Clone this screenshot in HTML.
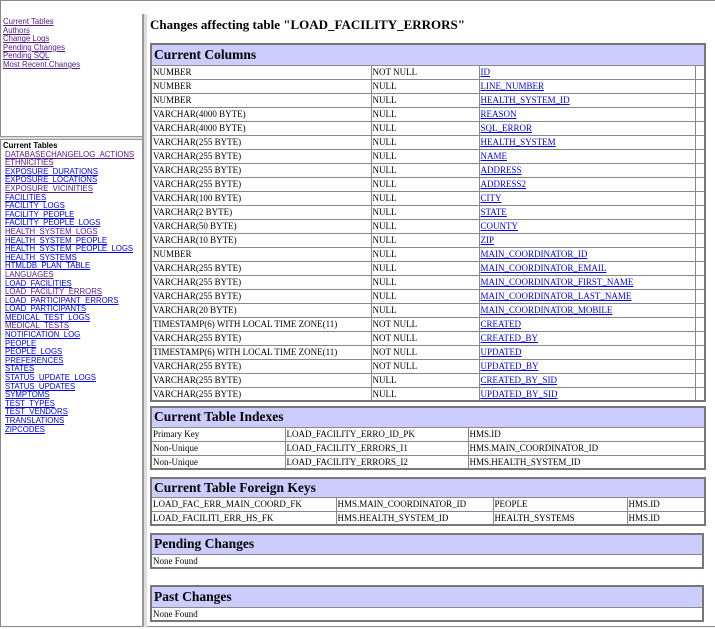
<!DOCTYPE html>
<html><head><meta charset="utf-8"><style>
*{margin:0;padding:0;box-sizing:border-box}
body{width:715px;height:629px;overflow:hidden;background:#fff;position:relative;font-family:"Liberation Serif",serif}
a{color:#0000EE}
a.v{color:#551A8B}
#frame{position:absolute;left:0;top:0;width:715px;height:627px;border-top:1px solid #888;border-left:1px solid #888;border-bottom:1px solid #888}
#vdiv{position:absolute;left:142px;top:14px;width:5px;height:613px;background:#ddd;border-left:2px solid #999}
#hdiv{position:absolute;left:0;top:136px;width:142px;height:4px;background:#ddd;border-top:1px solid #999;border-bottom:1px solid #999}
.nav{position:absolute;left:3px;font-family:"Liberation Sans",sans-serif;font-size:7.8px;line-height:8.6px}
.nav a{display:block}
.list a{padding-left:2px}
h1{position:absolute;left:150px;top:17px;font-size:13px;font-weight:bold}
table{position:absolute;left:150px;width:554px;border-collapse:collapse;table-layout:fixed;border:2px solid #777;font-size:9px}
td{border:1px solid #888;padding:0 1px;height:14px;white-space:nowrap;overflow:hidden;line-height:12px}
th{background:#ccf;text-align:left;font-size:13.5px;font-weight:bold;padding:0 2px;border:1px solid #888}
</style></head><body>
<div id="frame"></div>
<div class="nav" style="top:18px">
<a class="v" href="#">Current Tables</a><a class="v" href="#">Authors</a><a class="v" href="#">Change Logs</a><a class="v" href="#">Pending Changes</a><a class="v" href="#">Pending SQL</a><a class="v" href="#">Most Recent Changes</a>
</div>
<div id="hdiv"></div>
<div class="nav list" style="top:142px">
<b style="display:block">Current Tables</b>
<a class="v" href="#">DATABASECHANGELOG_ACTIONS</a><a class="v" href="#">ETHNICITIES</a><a href="#">EXPOSURE_DURATIONS</a><a href="#">EXPOSURE_LOCATIONS</a><a class="v" href="#">EXPOSURE_VICINITIES</a><a href="#">FACILITIES</a><a href="#">FACILITY_LOGS</a><a href="#">FACILITY_PEOPLE</a><a href="#">FACILITY_PEOPLE_LOGS</a><a class="v" href="#">HEALTH_SYSTEM_LOGS</a><a href="#">HEALTH_SYSTEM_PEOPLE</a><a href="#">HEALTH_SYSTEM_PEOPLE_LOGS</a><a href="#">HEALTH_SYSTEMS</a><a href="#">HTMLDB_PLAN_TABLE</a><a class="v" href="#">LANGUAGES</a><a href="#">LOAD_FACILITIES</a><a class="v" href="#">LOAD_FACILITY_ERRORS</a><a href="#">LOAD_PARTICIPANT_ERRORS</a><a href="#">LOAD_PARTICIPANTS</a><a href="#">MEDICAL_TEST_LOGS</a><a class="v" href="#">MEDICAL_TESTS</a><a href="#">NOTIFICATION_LOG</a><a href="#">PEOPLE</a><a href="#">PEOPLE_LOGS</a><a href="#">PREFERENCES</a><a href="#">STATES</a><a href="#">STATUS_UPDATE_LOGS</a><a href="#">STATUS_UPDATES</a><a href="#">SYMPTOMS</a><a href="#">TEST_TYPES</a><a href="#">TEST_VENDORS</a><a href="#">TRANSLATIONS</a><a href="#">ZIPCODES</a>
</div>
<div id="vdiv"></div>
<h1>Changes affecting table "LOAD_FACILITY_ERRORS"</h1>

<table style="top:43px">
<col style="width:220px"><col style="width:108px"><col style="width:216px"><col style="width:10px">
<tr><th colspan="4" style="height:21px">Current Columns</th></tr>
<tr><td>NUMBER</td><td>NOT NULL</td><td><a href="#">ID</a></td><td></td></tr>
<tr><td>NUMBER</td><td>NULL</td><td><a href="#">LINE_NUMBER</a></td><td></td></tr>
<tr><td>NUMBER</td><td>NULL</td><td><a href="#">HEALTH_SYSTEM_ID</a></td><td></td></tr>
<tr><td>VARCHAR(4000 BYTE)</td><td>NULL</td><td><a href="#">REASON</a></td><td></td></tr>
<tr><td>VARCHAR(4000 BYTE)</td><td>NULL</td><td><a href="#">SQL_ERROR</a></td><td></td></tr>
<tr><td>VARCHAR(255 BYTE)</td><td>NULL</td><td><a href="#">HEALTH_SYSTEM</a></td><td></td></tr>
<tr><td>VARCHAR(255 BYTE)</td><td>NULL</td><td><a href="#">NAME</a></td><td></td></tr>
<tr><td>VARCHAR(255 BYTE)</td><td>NULL</td><td><a href="#">ADDRESS</a></td><td></td></tr>
<tr><td>VARCHAR(255 BYTE)</td><td>NULL</td><td><a href="#">ADDRESS2</a></td><td></td></tr>
<tr><td>VARCHAR(100 BYTE)</td><td>NULL</td><td><a href="#">CITY</a></td><td></td></tr>
<tr><td>VARCHAR(2 BYTE)</td><td>NULL</td><td><a href="#">STATE</a></td><td></td></tr>
<tr><td>VARCHAR(50 BYTE)</td><td>NULL</td><td><a href="#">COUNTY</a></td><td></td></tr>
<tr><td>VARCHAR(10 BYTE)</td><td>NULL</td><td><a href="#">ZIP</a></td><td></td></tr>
<tr><td>NUMBER</td><td>NULL</td><td><a href="#">MAIN_COORDINATOR_ID</a></td><td></td></tr>
<tr><td>VARCHAR(255 BYTE)</td><td>NULL</td><td><a href="#">MAIN_COORDINATOR_EMAIL</a></td><td></td></tr>
<tr><td>VARCHAR(255 BYTE)</td><td>NULL</td><td><a href="#">MAIN_COORDINATOR_FIRST_NAME</a></td><td></td></tr>
<tr><td>VARCHAR(255 BYTE)</td><td>NULL</td><td><a href="#">MAIN_COORDINATOR_LAST_NAME</a></td><td></td></tr>
<tr><td>VARCHAR(20 BYTE)</td><td>NULL</td><td><a href="#">MAIN_COORDINATOR_MOBILE</a></td><td></td></tr>
<tr><td>TIMESTAMP(6) WITH LOCAL TIME ZONE(11)</td><td>NOT NULL</td><td><a href="#">CREATED</a></td><td></td></tr>
<tr><td>VARCHAR(255 BYTE)</td><td>NOT NULL</td><td><a href="#">CREATED_BY</a></td><td></td></tr>
<tr><td>TIMESTAMP(6) WITH LOCAL TIME ZONE(11)</td><td>NOT NULL</td><td><a href="#">UPDATED</a></td><td></td></tr>
<tr><td>VARCHAR(255 BYTE)</td><td>NOT NULL</td><td><a href="#">UPDATED_BY</a></td><td></td></tr>
<tr><td>VARCHAR(255 BYTE)</td><td>NULL</td><td><a href="#">CREATED_BY_SID</a></td><td></td></tr>
<tr><td>VARCHAR(255 BYTE)</td><td>NULL</td><td><a href="#">UPDATED_BY_SID</a></td><td></td></tr>
</table>

<table style="top:406px">
<col style="width:134px"><col style="width:183px"><col style="width:237px">
<tr><th colspan="3" style="height:20px">Current Table Indexes</th></tr>
<tr><td>Primary Key</td><td>LOAD_FACILITY_ERRO_ID_PK</td><td>HMS.ID</td></tr>
<tr><td>Non-Unique</td><td>LOAD_FACILITY_ERRORS_I1</td><td>HMS.MAIN_COORDINATOR_ID</td></tr>
<tr><td>Non-Unique</td><td>LOAD_FACILITY_ERRORS_I2</td><td>HMS.HEALTH_SYSTEM_ID</td></tr>
</table>

<table style="top:477px">
<col style="width:185px"><col style="width:157px"><col style="width:134px"><col style="width:78px">
<tr><th colspan="4" style="height:19px">Current Table Foreign Keys</th></tr>
<tr><td>LOAD_FAC_ERR_MAIN_COORD_FK</td><td>HMS.MAIN_COORDINATOR_ID</td><td>PEOPLE</td><td>HMS.ID</td></tr>
<tr><td>LOAD_FACILITI_ERR_HS_FK</td><td>HMS.HEALTH_SYSTEM_ID</td><td>HEALTH_SYSTEMS</td><td>HMS.ID</td></tr>
</table>

<table style="top:533px">
<tr><th style="height:20px">Pending Changes</th></tr>
<tr><td>None Found</td></tr>
</table>

<table style="top:585px">
<tr><th style="height:21px">Past Changes</th></tr>
<tr><td>None Found</td></tr>
</table>
</body></html>
